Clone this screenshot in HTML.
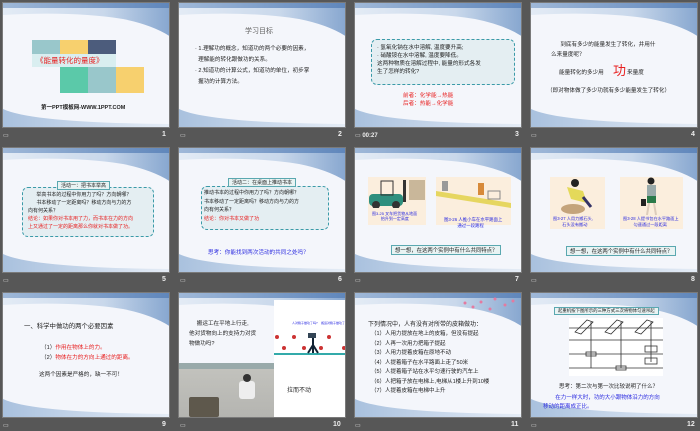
<!DOCTYPE html>
<html><head><meta charset="utf-8"><style>
*{margin:0;padding:0;box-sizing:border-box}
body{width:700px;height:431px;background:#575757;position:relative;overflow:hidden;font-family:"Liberation Sans","Noto Sans CJK SC",sans-serif}
.s{position:absolute;width:168px;height:126px;background:#f4f6fb;overflow:hidden;border:1px solid #7a7a7a}
.s>svg.bg{position:absolute;left:0;top:0}
.t{position:absolute;font-size:5.6px;line-height:1.5;color:#222;white-space:nowrap}
.n{position:absolute;color:#eee;font-size:7px;font-weight:bold}
.ic{position:absolute;color:#ddd;font-size:6px}
.r{color:#e82020}.b{color:#2a2ae0}
.box{position:absolute;border:1px dashed #3a9aa8;border-radius:6px;background:#e4eef2}
.lab{position:absolute;border:1px solid #5aa8b0;background:#e8f3f3;font-size:5px;padding:0 3px;color:#222;white-space:nowrap}
</style></head><body>
<svg width="0" height="0" style="position:absolute"><defs>
<linearGradient id="g" x1="0" x2="1"><stop offset="0" stop-color="#9fb8d8"/><stop offset="1" stop-color="#5f86bb"/></linearGradient>
<linearGradient id="h" x1="0" x2="1"><stop offset="0" stop-color="#e3ebf5"/><stop offset="0.6" stop-color="#c9d8eb"/><stop offset="1" stop-color="#86a6cf"/></linearGradient>
<linearGradient id="k" x1="0" x2="1"><stop offset="0" stop-color="#a9c1de"/><stop offset="1" stop-color="#e6edf6"/></linearGradient>
<g id="B"><rect width="168" height="126" fill="#f4f6fb"/><path d="M0 0 L168 0 L168 34 Q150 22 120 16 Q70 8 0 12Z" fill="url(#h)"/><rect width="168" height="5" fill="url(#g)"/><path d="M0 106 Q30 120 168 121 L168 126 L0 126Z" fill="url(#k)"/></g>
</defs></svg>

<!-- Row 1 -->
<div class="s" style="left:2px;top:2px">
<svg class="bg" width="168" height="126"><use href="#B"/></svg>
<div style="position:absolute;left:29px;top:37px;width:28px;height:14px;background:#99c7cb"></div>
<div style="position:absolute;left:57px;top:37px;width:28px;height:14px;background:#f7d06e"></div>
<div style="position:absolute;left:85px;top:37px;width:28px;height:14px;background:#4c5c7c"></div>
<div style="position:absolute;left:29px;top:51px;width:84px;height:13px;background:#d9eef0"></div>
<div style="position:absolute;left:57px;top:64px;width:28px;height:26px;background:#5bc9a9"></div>
<div style="position:absolute;left:85px;top:64px;width:28px;height:26px;background:#99c7cb"></div>
<div style="position:absolute;left:113px;top:64px;width:28px;height:26px;background:#f7d06e"></div>
<div class="t r" style="left:33px;top:52px;font-size:7.5px">《能量转化的量度》</div>
<div class="t" style="left:38px;top:101px;font-weight:bold;font-size:5.5px">第一PPT模板网-WWW.1PPT.COM</div>
</div>

<div class="s" style="left:178px;top:2px">
<svg class="bg" width="168" height="126"><use href="#B"/></svg>
<div class="t" style="left:66px;top:24px;font-size:7px;color:#666">学习目标</div>
<div class="t" style="left:16px;top:41px;line-height:11px">· 1.理解功的概念，知道功的两个必要的因素，<br>&nbsp;&nbsp;理解能的转化跟做功的关系。<br>· 2.知道功的计算公式，知道功的单位，初步掌<br>&nbsp;&nbsp;握功的计算方法。</div>
</div>

<div class="s" style="left:354px;top:2px">
<svg class="bg" width="168" height="126"><use href="#B"/></svg>
<div class="box" style="left:16px;top:36px;width:144px;height:46px"></div>
<div class="t" style="left:22px;top:41px;line-height:8px">· 氢氧化钠在水中溶解, 温度要升高;<br>· 硝酸铵在水中溶解, 温度要降低。<br>这两种物质在溶解过程中, 能量的形式各发<br>生了怎样的转化?</div>
<div class="t r" style="left:48px;top:89px;line-height:8px">前者：化学能→热能<br>后者：热能→化学能</div>
</div>

<div class="s" style="left:530px;top:2px">
<svg class="bg" width="168" height="126"><use href="#B"/></svg>
<div class="t" style="left:20px;top:37px;line-height:10px">&nbsp;&nbsp;&nbsp;&nbsp;&nbsp;&nbsp;到底有多少的能量发生了转化，并用什<br>么来量度呢？</div>
<div class="t" style="left:28px;top:66px">能量转化的多少用</div>
<div class="t r" style="left:82px;top:58px;font-size:13px">功</div>
<div class="t" style="left:96px;top:66px">来量度</div>
<div class="t" style="left:16px;top:84px">（即对物体做了多少功就有多少能量发生了转化）</div>
</div>

<div class="ic" style="left:3px;top:132px">▭</div><div class="n" style="left:162px;top:131px">1</div>
<div class="ic" style="left:180px;top:132px">▭</div><div class="n" style="left:338px;top:131px">2</div>
<div class="ic" style="left:355px;top:132px">▭ <b style="color:#eee">00:27</b></div><div class="n" style="left:515px;top:131px">3</div>
<div class="ic" style="left:531px;top:132px">▭</div><div class="n" style="left:691px;top:131px">4</div>

<!-- Row 2 -->
<div class="s" style="left:2px;top:147px">
<svg class="bg" width="168" height="126"><use href="#B"/></svg>
<div class="box" style="left:19px;top:39px;width:132px;height:50px"></div>
<div class="lab" style="left:54px;top:33px">活动一：把书本举高</div>
<div class="t" style="left:25px;top:43px;line-height:8px;font-size:5px">&nbsp;&nbsp;&nbsp;&nbsp;&nbsp;&nbsp;举高书本的过程中你用力了吗？方向朝哪？<br>&nbsp;&nbsp;&nbsp;&nbsp;&nbsp;&nbsp;书本移动了一定距离吗？移动方向与力的方<br>向有何关系？<br><span class="r">结论：如果你对书本用了力，而书本在力的方向<br>上又通过了一定的距离那么你就对书本做了功。</span></div>
</div>

<div class="s" style="left:178px;top:147px">
<svg class="bg" width="168" height="126"><use href="#B"/></svg>
<div class="box" style="left:22px;top:38px;width:128px;height:44px"></div>
<div class="lab" style="left:49px;top:30px">活动二：在桌面上推动书本</div>
<div class="t" style="left:25px;top:41px;line-height:8.5px;font-size:5px">推动书本的过程中你用力了吗？方向朝哪？<br>书本移动了一定距离吗？移动方向与力的方<br>向有何关系？<br><span class="r">结论：你对书本又做了功</span></div>
<div class="t b" style="left:29px;top:101px">思考：你能找到两次活动的共同之处吗？</div>
</div>

<div class="s" style="left:354px;top:147px">
<svg class="bg" width="168" height="126"><use href="#B"/></svg>
<div style="position:absolute;left:13px;top:29px;width:58px;height:48px;background:#fbeedd"></div>
<svg style="position:absolute;left:14px;top:30px" width="58" height="30"><rect x="0" y="16" width="34" height="12" rx="4" fill="#2e8f7e"/><rect x="12" y="3" width="12" height="14" fill="none" stroke="#333"/><circle cx="7" cy="27" r="4" fill="#333"/><circle cx="27" cy="27" r="4" fill="#333"/><rect x="34" y="2" width="3" height="22" fill="#333"/><rect x="40" y="2" width="16" height="20" fill="#c9b79a"/></svg>
<div class="t b" style="left:17px;top:63px;font-size:4px;line-height:5px">图3-25 叉车把货物从地面<br>&nbsp;&nbsp;&nbsp;&nbsp;&nbsp;&nbsp;&nbsp;&nbsp;抬升到一定高度</div>
<div style="position:absolute;left:81px;top:29px;width:75px;height:48px;background:#fbeedd"></div>
<svg style="position:absolute;left:81px;top:29px" width="75" height="32"><path d="M0 14 L75 26 L75 31 L0 19Z" fill="#e6d660"/><rect x="6" y="4" width="6" height="10" fill="#999"/><rect x="42" y="6" width="6" height="12" fill="#d78a3a"/><rect x="52" y="14" width="12" height="8" fill="none" stroke="#888"/></svg>
<div class="t b" style="left:89px;top:69px;font-size:4.4px;line-height:6px">图3-26 人推小车在水平路面上<br>&nbsp;&nbsp;&nbsp;&nbsp;&nbsp;&nbsp;&nbsp;&nbsp;&nbsp;&nbsp;&nbsp;通过一段路程</div>
<div class="lab" style="left:36px;top:97px;font-size:5.4px">想一想，在这两个实例中有什么共同特点？</div>
</div>

<div class="s" style="left:530px;top:147px">
<svg class="bg" width="168" height="126"><use href="#B"/></svg>
<div style="position:absolute;left:19px;top:29px;width:55px;height:52px;background:#fbeedd"></div>
<svg style="position:absolute;left:22px;top:29px" width="50" height="40"><circle cx="22" cy="6" r="4" fill="#222"/><path d="M14 10 L30 14 L34 26 L18 22Z" fill="#e4d95a"/><ellipse cx="20" cy="32" rx="12" ry="5" fill="#c4a47c"/><path d="M30 20 L38 30" stroke="#336" stroke-width="3"/></svg>
<div class="t b" style="left:22px;top:68px;font-size:4.2px;line-height:6px">图3-27 人用力搬石头,<br>&nbsp;&nbsp;&nbsp;&nbsp;&nbsp;&nbsp;&nbsp;&nbsp;石头没有搬动</div>
<div style="position:absolute;left:89px;top:29px;width:63px;height:52px;background:#fbeedd"></div>
<svg style="position:absolute;left:108px;top:29px" width="25" height="40"><circle cx="12" cy="4" r="3.5" fill="#222"/><rect x="8" y="8" width="9" height="11" fill="#9aa"/><rect x="8" y="19" width="9" height="7" fill="#2a7a4a"/><path d="M10 26 L8 38 M15 26 L17 38" stroke="#dcb" stroke-width="2"/><rect x="2" y="22" width="5" height="7" fill="#222"/></svg>
<div class="t b" style="left:92px;top:68px;font-size:4.2px;line-height:6px">图3-28 人提书包在水平路面上<br>&nbsp;&nbsp;&nbsp;&nbsp;&nbsp;&nbsp;&nbsp;&nbsp;&nbsp;匀速通过一段距离</div>
<div class="lab" style="left:35px;top:98px;font-size:5.4px">想一想，在这两个实例中有什么共同特点？</div>
</div>

<div class="ic" style="left:3px;top:277px">▭</div><div class="n" style="left:162px;top:276px">5</div>
<div class="ic" style="left:180px;top:277px">▭</div><div class="n" style="left:338px;top:276px">6</div>
<div class="ic" style="left:355px;top:277px">▭</div><div class="n" style="left:515px;top:276px">7</div>
<div class="ic" style="left:531px;top:277px">▭</div><div class="n" style="left:691px;top:276px">8</div>

<!-- Row 3 -->
<div class="s" style="left:2px;top:292px">
<svg class="bg" width="168" height="126"><use href="#B"/></svg>
<div class="t" style="left:21px;top:29px;font-size:6.4px">一、科学中做功的两个必要因素</div>
<div class="t" style="left:38px;top:50px;line-height:10px">（1）<span class="r">作用在物体上的力。</span><br>（2）<span class="r">物体在力的方向上通过的距离。</span></div>
<div class="t" style="left:36px;top:78px">这两个因素是严格的，缺一不可！</div>
</div>

<div class="s" style="left:178px;top:292px">
<svg class="bg" width="168" height="126"><use href="#B"/></svg>
<div class="t" style="left:10px;top:26px;line-height:10px;font-size:5.6px">&nbsp;&nbsp;&nbsp;&nbsp;&nbsp;搬运工在平地上行走,<br>他对货物向上的支持力对货<br>物做功吗?</div>
<div style="position:absolute;left:95px;top:7px;width:73px;height:119px;background:#fff"></div>
<div style="position:absolute;left:95px;top:60px;width:73px;height:1.5px;background:#3aa"></div>
<div class="t b" style="left:113px;top:28px;font-size:3px">人对箱子做功了吗?</div>
<div class="t b" style="left:142px;top:28px;font-size:3px">搬运对箱子做功了吗?</div>
<svg style="position:absolute;left:95px;top:40px" width="73" height="22"><g fill="#c33"><circle cx="3" cy="4" r="2"/><circle cx="20" cy="4" r="2"/><circle cx="55" cy="4" r="2"/><circle cx="10" cy="15" r="2"/><circle cx="30" cy="15" r="2"/><circle cx="47" cy="15" r="2"/><circle cx="70" cy="15" r="2"/></g><path d="M39 4 L39 20 M39 12 L34 20 M39 12 L44 20" stroke="#123" stroke-width="2"/><rect x="34" y="0" width="8" height="5" fill="#345"/></svg>
<div class="t" style="left:108px;top:94px;font-size:6px">拉而不动</div>
<div style="position:absolute;left:0;top:70px;width:95px;height:56px;background:linear-gradient(#9aa 0,#9aa 6px,#c2c2bd 6px,#b4b4b0)"></div>
<div style="position:absolute;left:10px;top:104px;width:30px;height:20px;background:#5e584c;border-radius:2px"></div>
<div style="position:absolute;left:60px;top:88px;width:16px;height:18px;background:#eee;border-radius:3px"></div>
<div style="position:absolute;left:64px;top:81px;width:8px;height:8px;background:#333;border-radius:50%"></div>
</div>

<div class="s" style="left:354px;top:292px">
<svg class="bg" width="168" height="126"><use href="#B"/><g fill="#e47aa0"><circle cx="110" cy="10" r="1.5"/><circle cx="118" cy="14" r="1.5"/><circle cx="126" cy="9" r="1.5"/><circle cx="140" cy="6" r="1.5"/><circle cx="150" cy="12" r="1.5"/><circle cx="158" cy="8" r="1.5"/><circle cx="135" cy="16" r="1.5"/></g></svg>
<div class="t" style="left:13px;top:28px;font-size:6px">下列情况中，人有没有对所带的皮箱做功：</div>
<div class="t" style="left:16px;top:37px;line-height:9.5px;font-size:5.5px">（1）人用力提放在地上的皮箱，但没有提起<br>（2）人再一次用力把箱子提起<br>（3）人用力提着皮箱在原地不动<br>（4）人提着箱子在水平路面上走了50米<br>（5）人提着箱子站在水平匀速行驶的汽车上<br>（6）人把箱子放在电梯上,电梯从1楼上升到10楼<br>（7）人提着皮箱在电梯中上升</div>
</div>

<div class="s" style="left:530px;top:292px">
<svg class="bg" width="168" height="126"><use href="#B"/></svg>
<div class="lab" style="left:23px;top:14px;font-size:4.4px">起重机按下图所示的三种方式三次将物体匀速吊起</div>
<svg style="position:absolute;left:38px;top:25px" width="94" height="58"><rect width="94" height="58" fill="#fff"/><g stroke="#333" stroke-width="0.8" fill="none"><path d="M0 10 H94 M0 22 H94 M0 36 H94 M0 50 H94"/><path d="M6 14 L18 2 L24 4 L12 16Z M36 14 L48 2 L54 4 L42 16Z M66 14 L78 2 L84 4 L72 16Z"/><path d="M22 4 V50 M52 4 V50 M82 4 V44"/><rect x="17" y="34" width="10" height="4"/><rect x="47" y="48" width="10" height="4"/><rect x="76" y="28" width="12" height="6"/><rect x="76" y="40" width="12" height="6"/></g></svg>
<div class="t" style="left:28px;top:90px;font-size:5.5px">思考：第二次与第一次比较说明了什么？</div>
<div class="t b" style="left:12px;top:101px;line-height:9px;font-size:5.5px">&nbsp;&nbsp;&nbsp;&nbsp;&nbsp;&nbsp;&nbsp;&nbsp;在力一样大时，功的大小跟物体沿力的方向<br>移动的距离成正比。</div>
</div>

<div class="ic" style="left:3px;top:422px">▭</div><div class="n" style="left:162px;top:421px">9</div>
<div class="ic" style="left:180px;top:422px">▭</div><div class="n" style="left:333px;top:421px">10</div>
<div class="ic" style="left:355px;top:422px">▭</div><div class="n" style="left:511px;top:421px">11</div>
<div class="ic" style="left:531px;top:422px">▭</div><div class="n" style="left:687px;top:421px">12</div>
</body></html>
